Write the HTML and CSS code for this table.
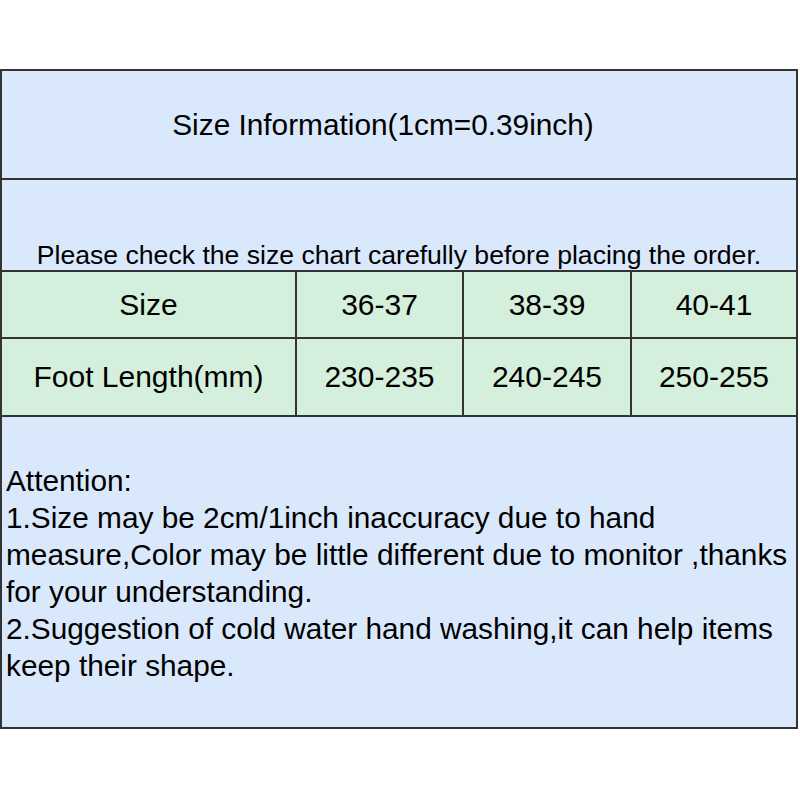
FILE: index.html
```html
<!DOCTYPE html>
<html>
<head>
<meta charset="utf-8">
<link rel="stylesheet" href="styles.css">
</head>
<body>
<div class="sheet">
  <div class="title">Size Information(1cm=0.39inch)</div>
  <div class="notice">Please check the size chart carefully before placing the order.</div>
  <div class="chart">
    <div class="cell">Size</div>
    <div class="cell">36-37</div>
    <div class="cell">38-39</div>
    <div class="cell">40-41</div>
    <div class="cell tall">Foot Length(mm)</div>
    <div class="cell tall">230-235</div>
    <div class="cell tall">240-245</div>
    <div class="cell tall">250-255</div>
  </div>
  <div class="attention">
    <p>Attention:</p>
    <p>1.Size may be 2cm/1inch inaccuracy due to hand<br>measure,Color may be little different due to monitor ,thanks<br>for your understanding.</p>
    <p>2.Suggestion of cold water hand washing,it can help items<br>keep their shape.</p>
  </div>
</div>
</body>
</html>
```

FILE: styles.css
```css
html, body {
  margin: 0;
  padding: 0;
  background: #ffffff;
}

body {
  font-family: "Liberation Sans", Arial, sans-serif;
  color: #000;
}

.sheet {
  box-sizing: border-box;
  margin-top: 69px;
  width: 798px;
  border: 2px solid #333;
  background: #dae8fc;
}

.title {
  height: 109px;
  box-sizing: border-box;
  display: flex;
  align-items: center;
  justify-content: center;
  padding-right: 32px;
  font-size: 29.8px;
  border-bottom: 2px solid #333;
}

.notice {
  height: 90px;
  box-sizing: border-box;
  display: flex;
  align-items: flex-end;
  justify-content: center;
  font-size: 26.6px;
  line-height: 26px;
  padding-bottom: 2px;
  white-space: nowrap;
}

.chart {
  display: grid;
  grid-template-columns: 293px 165px 166px 1fr;
  grid-template-rows: 65px 76px;
  gap: 2px;
  background: #333;
  border-top: 2px solid #333;
  border-bottom: 2px solid #333;
}

.cell {
  background: #d4efdb;
  display: flex;
  align-items: center;
  justify-content: center;
  font-size: 30px;
  white-space: nowrap;
}

.attention {
  height: 310px;
  box-sizing: border-box;
  padding: 45px 0 0 4px;
  font-size: 29.8px;
  line-height: 37px;
  white-space: nowrap;
}

.attention p {
  margin: 0;
}
```
